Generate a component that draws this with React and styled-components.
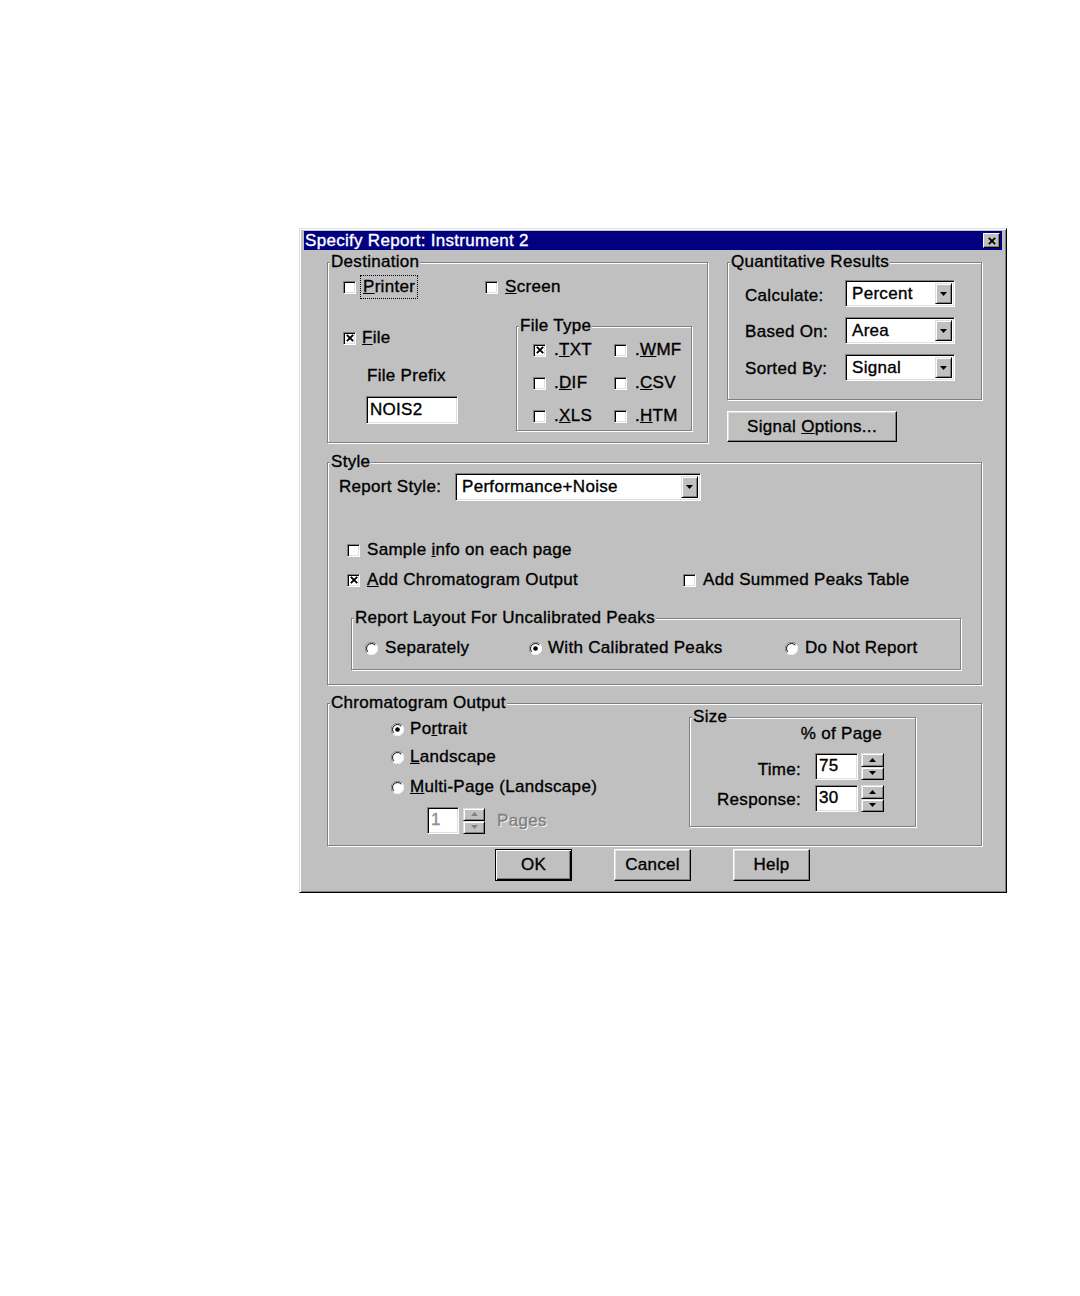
import React from 'react'
import styled, { createGlobalStyle } from 'styled-components'

const GlobalStyle = createGlobalStyle`
  html, body { margin: 0; padding: 0; background: #fff; }
  body { font-family: "Liberation Sans", Arial, sans-serif; }
`

const Page = styled.div`
  box-sizing: border-box;
  min-height: 1296px;
  padding: 228px 0 0 299px;
`

const Window = styled.div`
  width: 708px;
  box-sizing: border-box;
  background: #c0c0c0;
  border: 1px solid;
  border-color: #dfdfdf #000 #000 #dfdfdf;
  box-shadow: inset 1px 1px 0 #fff, inset -1px -1px 0 #808080;
  padding: 2px 4px 11px 4px;
  color: #000;
  font-size: 17px;
  letter-spacing: 0.3px;
  -webkit-text-stroke: 0.35px currentColor;
`

const TitleBar = styled.div`
  display: flex;
  align-items: center;
  height: 19px;
  background: #000080;
  color: #fff;
  padding: 0 2px 0 1px;
`

const TitleText = styled.span`
  line-height: 19px;
`

const CloseButton = styled.span`
  margin-left: auto;
  width: 17px;
  height: 15px;
  box-sizing: border-box;
  display: flex;
  align-items: center;
  justify-content: center;
  background: #c0c0c0;
  border: 1px solid;
  border-color: #fff #000 #000 #fff;
  box-shadow: inset -1px -1px 0 #808080;
`

const Body = styled.div`
  padding: 5px 20px 0 23px;
`

const TopRow = styled.div`
  display: flex;
  align-items: flex-start;
  gap: 19px;
`

const Column = styled.div`
  display: flex;
  flex-direction: column;
  width: ${p => p.$w}px;
`

const Group = styled.fieldset`
  margin: ${p => p.$m || '0'};
  padding: 0;
  min-width: 0;
  box-sizing: border-box;
  width: ${p => (p.$w ? `${p.$w}px` : 'auto')};
  border: 1px solid #808080;
  box-shadow: inset 1px 1px 0 #fff, 1px 1px 0 #fff;
`

const Legend = styled.legend`
  margin-left: 2px;
  padding: 0 1px;
  line-height: 14px;
  background: #c0c0c0;
`

const Pad = styled.div`
  padding: ${p => p.$p};
`

const Row = styled.div`
  display: flex;
  align-items: ${p => (p.$top ? 'flex-start' : 'center')};
  margin-top: ${p => p.$mt || 0}px;
  padding-left: ${p => p.$pl || 0}px;
  padding-bottom: ${p => p.$pb || 0}px;
`

const Option = styled.label`
  display: flex;
  align-items: center;
  gap: ${p => p.$gap || 7}px;
  height: 22px;
  width: ${p => (p.$w ? `${p.$w}px` : 'auto')};
  flex: none;
  white-space: nowrap;
  & > svg { flex: none; }
`

const Focus = styled.span`
  outline: 1px dotted #000;
  outline-offset: 1px;
  padding: 0 1px;
`

const Box = styled.span`
  width: 13px;
  height: 13px;
  box-sizing: border-box;
  flex: none;
  display: flex;
  align-items: center;
  justify-content: center;
  background: #fff;
  border: 1px solid;
  border-color: #808080 #fff #fff #808080;
  box-shadow: inset 1px 1px 0 #000, inset -1px -1px 0 #dfdfdf;
`

const LeftCol = styled.div`
  display: flex;
  flex-direction: column;
  width: ${p => p.$w}px;
  padding-top: ${p => p.$pt || 0}px;
  padding-left: ${p => p.$pl || 0}px;
  box-sizing: border-box;
  flex: none;
`

const Label = styled.div`
  display: flex;
  align-items: center;
  height: ${p => p.$h || 22}px;
  margin-top: ${p => p.$mt || 0}px;
  margin-left: ${p => p.$ml || 0}px;
  margin-right: ${p => p.$mr || 0}px;
  padding-left: ${p => p.$pl || 0}px;
  padding-top: ${p => p.$pt || 0}px;
  box-sizing: border-box;
  width: ${p => (p.$w ? `${p.$w}px` : 'auto')};
  justify-content: ${p => (p.$right ? 'flex-end' : 'flex-start')};
  color: ${p => (p.$off ? '#808080' : 'inherit')};
  text-shadow: ${p => (p.$off ? '1px 1px 0 #fff' : 'none')};
  flex: none;
`

const TypeGrid = styled.div`
  display: grid;
  grid-template-columns: 81px auto;
  grid-auto-rows: 22px;
  row-gap: 11px;
  padding: 6px 0 3px 16px;
`

const FormGrid = styled.div`
  display: grid;
  grid-template-columns: ${p => p.$cols};
  grid-auto-rows: ${p => p.$rowH}px;
  row-gap: ${p => p.$gap}px;
  align-items: center;
  padding: ${p => p.$p};
`

const Sunken = styled.div`
  display: flex;
  align-items: ${p => (p.$top ? 'flex-start' : 'center')};
  width: ${p => p.$w}px;
  height: ${p => p.$h}px;
  margin-top: ${p => p.$mt || 0}px;
  margin-left: ${p => p.$ml || 0}px;
  box-sizing: border-box;
  flex: none;
  background: #fff;
  border: 1px solid;
  border-color: #808080 #fff #fff #808080;
  box-shadow: inset 1px 1px 0 #000, inset -1px -1px 0 #dfdfdf;
  padding: 2px;
  color: ${p => (p.$off ? '#909090' : '#000')};
`

const FieldText = styled.span`
  flex: 1;
  padding-left: ${p => p.$pl ?? 4}px;
  white-space: nowrap;
  overflow: hidden;
`

const Raised = styled.span`
  display: flex;
  align-items: center;
  justify-content: center;
  box-sizing: border-box;
  background: #c0c0c0;
  border: 1px solid;
  border-color: #dfdfdf #000 #000 #dfdfdf;
  box-shadow: inset 1px 1px 0 #fff, inset -1px -1px 0 #808080;
`

const DropButton = styled(Raised)`
  width: 17px;
  height: 100%;
  flex: none;
`

const Spin = styled.div`
  display: flex;
  flex-direction: column;
  width: ${p => p.$w}px;
  height: ${p => p.$h}px;
  margin-left: ${p => p.$ml || 0}px;
  flex: none;
  & > span { flex: 1; }
`

const Button = styled.button`
  width: ${p => p.$w}px;
  height: ${p => p.$h}px;
  box-sizing: border-box;
  margin-top: ${p => p.$mt || 0}px;
  padding: 0;
  background: #c0c0c0;
  font: inherit;
  letter-spacing: inherit;
  color: #000;
  -webkit-text-stroke: 0.35px #000;
  border: 1px solid;
  border-color: ${p => (p.$default ? '#000' : '#fff #000 #000 #fff')};
  box-shadow: ${p =>
    p.$default
      ? 'inset 1px 1px 0 #fff, inset -1px -1px 0 #000, inset -2px -2px 0 #808080'
      : 'inset -1px -1px 0 #808080, inset 1px 1px 0 #dfdfdf'};
`

const ButtonRow = styled.div`
  display: flex;
  gap: 42px;
  padding-left: 168px;
  margin-top: 3px;
`

const Arrow = ({ up, off }) => (
  <svg width="7" height="4" viewBox="0 0 7 4">
    <path d={up ? 'M0 4 L3.5 0 L7 4 Z' : 'M0 0 L7 0 L3.5 4 Z'} fill={off ? '#808080' : '#000'} />
  </svg>
)

const Cross = ({ size = 8, w = 1.9 }) => (
  <svg width={size} height={size} viewBox="0 0 8 8">
    <path d="M0.8 0.8 L7.2 7.2 M7.2 0.8 L0.8 7.2" stroke="#000" strokeWidth={w} />
  </svg>
)

const RadioMark = ({ on }) => (
  <svg width="13" height="13" viewBox="0 0 13 13">
    <circle cx="6.5" cy="6.5" r="6" fill="#fff" />
    <path d="M11.2 2.3 A6 6 0 0 0 1.8 10.7" fill="none" stroke="#808080" strokeWidth="1" />
    <path d="M10.2 3.2 A4.9 4.9 0 0 0 2.8 9.8" fill="none" stroke="#000" strokeWidth="1" />
    <path d="M1.8 10.7 A6 6 0 0 0 11.2 2.3" fill="none" stroke="#f4f4f4" strokeWidth="1" />
    {on && <circle cx="6.5" cy="6.5" r="2.3" fill="#000" />}
  </svg>
)

const Check = ({ on, children, w, gap }) => (
  <Option $w={w} $gap={gap}>
    <Box>{on && <Cross />}</Box>
    <span>{children}</span>
  </Option>
)

const RadioOption = ({ on, children, w, gap }) => (
  <Option $w={w} $gap={gap}>
    <RadioMark on={on} />
    <span>{children}</span>
  </Option>
)

const Combo = ({ w, h, children }) => (
  <Sunken $w={w} $h={h}>
    <FieldText>{children}</FieldText>
    <DropButton><Arrow /></DropButton>
  </Sunken>
)

const Spinner = ({ off, h, w, ml }) => (
  <Spin $w={w} $h={h} $ml={ml}>
    <Raised><Arrow up off={off} /></Raised>
    <Raised><Arrow off={off} /></Raised>
  </Spin>
)

export default function App() {
  return (
    <>
      <GlobalStyle />
      <Page>
        <Window>
          <TitleBar>
            <TitleText>Specify Report: Instrument 2</TitleText>
            <CloseButton><Cross size={8} w={1.8} /></CloseButton>
          </TitleBar>

          <Body>
            <TopRow>
              <Group $w={381}>
                <Legend>Destination</Legend>
                <Pad $p="7px 0 11px 15px">
                  <Row>
                    <Option $w={142} $gap={6}>
                      <Box />
                      <Focus><u>P</u>rinter</Focus>
                    </Option>
                    <Check><u>S</u>creen</Check>
                  </Row>
                  <Row $mt={21} $top>
                    <LeftCol $w={173} $pt={8}>
                      <Check on gap={6}><u>F</u>ile</Check>
                      <Label $mt={16} $pl={24}>File Prefix</Label>
                      <Sunken $w={92} $h={28} $mt={9} $ml={23}>
                        <FieldText $pl={1}>NOIS2</FieldText>
                      </Sunken>
                    </LeftCol>
                    <Group $w={176}>
                      <Legend>File Type</Legend>
                      <TypeGrid>
                        <Check on gap={8}>.<u>T</u>XT</Check>
                        <Check gap={8}>.<u>W</u>MF</Check>
                        <Check gap={8}>.<u>D</u>IF</Check>
                        <Check gap={8}>.<u>C</u>SV</Check>
                        <Check gap={8}>.<u>X</u>LS</Check>
                        <Check gap={8}>.<u>H</u>TM</Check>
                      </TypeGrid>
                    </Group>
                  </Row>
                </Pad>
              </Group>

              <Column $w={255}>
                <Group>
                  <Legend>Quantitative Results</Legend>
                  <FormGrid $cols="100px 110px" $rowH={27} $gap={10} $p="11px 0 18px 17px">
                    <Label $h={27} $pt={4}>Calculate:</Label>
                    <Combo w={110} h={27}>Percent</Combo>
                    <Label $h={27} $pt={2}>Based On:</Label>
                    <Combo w={110} h={27}>Area</Combo>
                    <Label $h={27} $pt={3}>Sorted By:</Label>
                    <Combo w={110} h={27}>Signal</Combo>
                  </FormGrid>
                </Group>
                <Button $w={170} $h={31} $mt={11}>Signal <u>O</u>ptions...</Button>
              </Column>
            </TopRow>

            <Group $m="12px 0 0 0">
              <Legend>Style</Legend>
              <Pad $p="4px 0 14px 0">
                <Row $pl={11}>
                  <Label $w={116}>Report Style:</Label>
                  <Combo w={246} h={28}>Performance+Noise</Combo>
                </Row>
                <Row $mt={38} $pl={19}>
                  <Check>Sample <u>i</u>nfo on each page</Check>
                </Row>
                <Row $mt={8} $pl={19}>
                  <Check on w={336}><u>A</u>dd Chromatogram Output</Check>
                  <Check>Add Summed Peaks Table</Check>
                </Row>
                <Group $m="20px 20px 0 23px">
                  <Legend>Report Layout For Uncalibrated Peaks</Legend>
                  <Pad $p="12px 0 10px 13px">
                    <Row>
                      <RadioOption w={164} gap={7}>Separately</RadioOption>
                      <RadioOption on w={256} gap={6}>With Calibrated Peaks</RadioOption>
                      <RadioOption gap={7}>Do Not Report</RadioOption>
                    </Row>
                  </Pad>
                </Group>
              </Pad>
            </Group>

            <Group $m="11px 0 0 0">
              <Legend>Chromatogram Output</Legend>
              <Row $top $pb={11}>
                <LeftCol $w={361} $pt={8} $pl={63}>
                  <RadioOption on gap={6}>Po<u>r</u>trait</RadioOption>
                  <Row $mt={6}><RadioOption gap={6}><u>L</u>andscape</RadioOption></Row>
                  <Row $mt={8}><RadioOption gap={6}><u>M</u>ulti-Page (Landscape)</RadioOption></Row>
                  <Row $mt={9} $pl={36}>
                    <Sunken $w={32} $h={27} $top $off>
                      <FieldText $pl={1}>1</FieldText>
                    </Sunken>
                    <Spinner off w={22} h={26} ml={4} />
                    <Label $off $ml={12}>Pages</Label>
                  </Row>
                </LeftCol>
                <Group $w={227}>
                  <Legend>Size</Legend>
                  <Pad $p="0 31px 14px 0">
                    <Label $right $h={20} $mr={2}>% of Page</Label>
                    <FormGrid $cols="1fr 43px 26px" $rowH={27} $gap={5} $p="9px 0 0 0">
                      <Label $right $h={27} $mr={14} $pt={7}>Time:</Label>
                      <Sunken $w={43} $h={27} $top>
                        <FieldText $pl={1}>75</FieldText>
                      </Sunken>
                      <Spinner w={23} h={27} ml={3} />
                      <Label $right $h={27} $mr={14} $pt={2}>Response:</Label>
                      <Sunken $w={43} $h={27} $top>
                        <FieldText $pl={1}>30</FieldText>
                      </Sunken>
                      <Spinner w={23} h={27} ml={3} />
                    </FormGrid>
                  </Pad>
                </Group>
              </Row>
            </Group>

            <ButtonRow>
              <Button $default $w={77} $h={32}>OK</Button>
              <Button $w={77} $h={32}>Cancel</Button>
              <Button $w={77} $h={32}>Help</Button>
            </ButtonRow>
          </Body>
        </Window>
      </Page>
    </>
  )
}
